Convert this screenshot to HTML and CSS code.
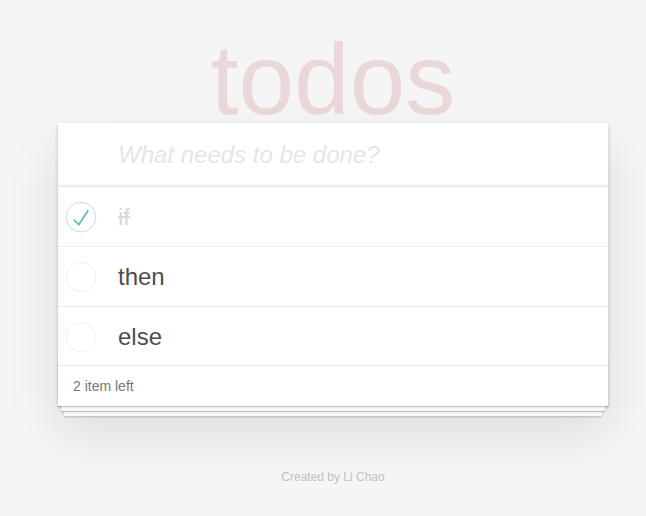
FILE: index.html
```html
<!DOCTYPE html>
<html>
<head>
<meta charset="utf-8">
<link rel="stylesheet" href="styles.css">
</head>
<body>
<div class="page">
  <h1 class="title">todos</h1>
  <section class="todoapp">
    <header class="header">
      <div class="new-todo">What needs to be done?</div>
    </header>
    <ul class="todo-list">
      <li class="item completed">
        <svg class="toggle" width="40" height="40" viewBox="-10 -18 100 135"><circle cx="50" cy="50" r="50" fill="none" stroke="#bddad5" stroke-width="3"/><path fill="#5dc2af" d="M72 25L42 71 27 56l-4 4 20 20 34-52z"/></svg>
        <span class="label">if</span>
      </li>
      <li class="item">
        <svg class="toggle" width="40" height="40" viewBox="-10 -18 100 135"><circle cx="50" cy="50" r="50" fill="none" stroke="#ededed" stroke-width="3"/></svg>
        <span class="label">then</span>
      </li>
      <li class="item">
        <svg class="toggle" width="40" height="40" viewBox="-10 -18 100 135"><circle cx="50" cy="50" r="50" fill="none" stroke="#ededed" stroke-width="3"/></svg>
        <span class="label">else</span>
      </li>
    </ul>
    <footer class="footer">
      <span class="todo-count">2 item left</span>
    </footer>
  </section>
  <p class="info">Created by Li Chao</p>
</div>
</body>
</html>
```
FILE: styles.css
```css
html, body {
  margin: 0;
  padding: 0;
}
body {
  background: #f5f5f5;
  color: #4d4d4d;
  font-family: "Liberation Sans", Arial, Helvetica, sans-serif;
  font-size: 14px;
  line-height: 1.4em;
}
.page {
  padding-top: 39px;
  width: 550px;
  margin-left: 58px;
}
.title {
  margin: 0 0 4px 0;
  font-size: 100px;
  line-height: 80px;
  font-weight: 400;
  text-align: center;
  color: rgba(175, 47, 47, 0.15);
}
.todoapp {
  background: #fff;
  box-shadow: 0 2px 4px 0 rgba(0, 0, 0, 0.2), 0 25px 50px 0 rgba(0, 0, 0, 0.1);
}
.header {
  height: 63px;
  box-sizing: border-box;
  padding: 16px 16px 16px 60px;
  box-shadow: inset 0 -2px 1px rgba(0, 0, 0, 0.03);
}
.new-todo {
  font-size: 24px;
  line-height: 31px;
  font-style: italic;
  color: #e6e6e6;
}
.todo-list {
  list-style: none;
  margin: 0;
  padding: 0;
  border-top: 1px solid #e6e6e6;
}
.item {
  display: flex;
  align-items: center;
  padding: 16px 15px 14px 0;
  font-size: 24px;
  line-height: 28.8px;
  border-bottom: 1px solid #ededed;
}
.item:last-child {
  border-bottom: none;
}
.toggle {
  flex: none;
  width: 40px;
  height: 40px;
  margin: -6px 0;
}
.label {
  margin-left: 20px;
}
.completed .label {
  color: #d9d9d9;
  text-decoration: line-through;
}
.footer {
  position: relative;
  color: #777;
  padding: 10px 15px;
  height: 20px;
  line-height: 20px;
  border-top: 1px solid #e6e6e6;
}
.footer::before {
  content: "";
  position: absolute;
  right: 0;
  bottom: 0;
  left: 0;
  height: 50px;
  overflow: hidden;
  box-shadow: 0 1px 1px rgba(0, 0, 0, 0.2),
              0 8px 0 -3px #f6f6f6,
              0 9px 1px -3px rgba(0, 0, 0, 0.2),
              0 16px 0 -6px #f6f6f6,
              0 17px 2px -6px rgba(0, 0, 0, 0.2);
}
.todo-count {
  position: relative;
}
.info {
  margin: 63px 0 0 0;
  color: #bfbfbf;
  font-size: 12px;
  line-height: 16px;
  text-align: center;
  text-shadow: 0 1px 0 rgba(255, 255, 255, 0.5);
}
```
